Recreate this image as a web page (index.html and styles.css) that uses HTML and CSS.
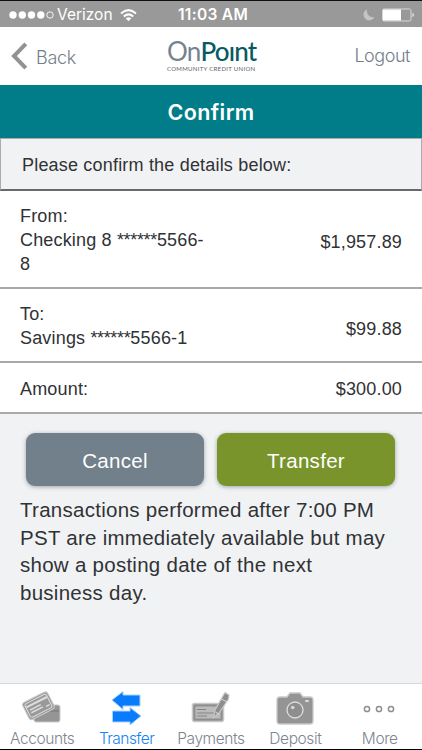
FILE: index.html
```html
<!DOCTYPE html>
<html lang="en">
<head>
<meta charset="utf-8">
<title>OnPoint – Confirm transfer</title>
<link rel="stylesheet" href="styles.css">
</head>
<body>
<div class="app">
  <div class="status">
    <div class="carrier">
      <svg class="signal" width="46" height="8" viewBox="0 0 46 8"><g fill="#fff"><circle cx="4" cy="4" r="3.7"/><circle cx="13.3" cy="4" r="3.7"/><circle cx="22.5" cy="4" r="3.7"/><circle cx="31.8" cy="4" r="3.7"/></g><circle cx="41" cy="4" r="3.2" fill="none" stroke="#fff" stroke-width=".9"/></svg>
      <span class="network">Verizon</span>
      <svg class="wifi" width="17" height="13" viewBox="0 0 17 13"><g fill="none" stroke="#fff" stroke-width="2"><path d="M1 4.4Q8.5-2.2 16 4.4"/><path d="M3.8 7.4Q8.5 3.3 13.2 7.4"/></g><path d="M5.7 9.3Q8.5 7 11.3 9.3L8.5 12.2Z" fill="#fff"/></svg>
    </div>
    <span class="time">11:03 AM</span>
    <div class="power">
      <svg width="53" height="14" viewBox="0 0 53 14"><path d="M5.2 1.2A5.8 5.8 0 1 0 12.5 9.2A6.3 6.3 0 0 1 5.2 1.2Z" fill="#c4c4c4"/><rect x="20.5" y="1" width="28.5" height="12" rx="1.5" fill="none" stroke="#d8d8d8"/><rect x="21" y="1.5" width="18" height="11" fill="#fff"/><path d="M50.3 5v4q1.8-.5 1.8-2t-1.8-2Z" fill="#ddd"/></svg>
    </div>
  </div>
  <header class="header">
    <div class="back"><svg width="17" height="28" viewBox="0 0 17 28"><path d="M14.8 1.8 3 14 14.8 26.2" fill="none" stroke="#929292" stroke-width="4"/></svg><span class="back-label">Back</span></div>
    <div class="logo">
      <div class="wordmark"><span class="on">On</span><span class="point">Poınt</span><span class="mark"></span></div>
      <div class="tagline">COMMUNITY CREDIT UNION</div>
    </div>
    <span class="logout">Logout</span>
  </header>
  <h1 class="title">Confirm</h1>
  <div class="notice">Please confirm the details below:</div>
  <main class="details">
    <div class="row from"><div>From:<br>Checking 8 <span class="mask">******</span>5566-<br>8</div><span>$1,957.89</span></div>
    <div class="row to"><div>To:<br>Savings <span class="mask">******</span>5566-1</div><span>$99.88</span></div>
    <div class="row amount"><div>Amount:</div><span>$300.00</span></div>
  </main>
  <div class="buttons"><button class="cancel">Cancel</button><button class="submit">Transfer</button></div>
  <p class="message">Transactions performed after 7:00 PM<br>PST are immediately available but may<br>show a posting date of the next<br>business day.</p>
  <nav class="tabs">
    <div class="tab accounts">
      <svg width="42" height="36" viewBox="0 0 42 36"><path d="M15 15h22q2 0 2 2v13q0 2-2 2H15q-2 0-2-2V17q0-2 2-2Z" fill="#959595" stroke="#ccc"/><path d="M14 21h24" stroke="#858585" stroke-width="2"/><g transform="rotate(-27 17 16)"><rect x="3.5" y="6.5" width="28" height="19" rx="3" fill="#999" stroke="#c9c9c9"/><rect x="5.5" y="8.5" width="24" height="15" rx="2" fill="none" stroke="#ddd"/><path d="M6 12h23" stroke="#ddd" stroke-width="2"/><path d="M8 16h12M8 19h13M24 20h4" stroke="#ddd" stroke-width="1.5"/></g></svg>
      <span>Accounts</span>
    </div>
    <div class="tab active">
      <svg width="32" height="36" viewBox="0 0 32 36"><path d="M1 10 12 1.5V5H29V16H12v3.5ZM30 26 19 17.5V21H1.5V32H19V35Z" fill="#087cfc" stroke="#a5d2ff" stroke-width="1" stroke-linejoin="round"/></svg>
      <span>Transfer</span>
    </div>
    <div class="tab payments">
      <svg width="40" height="36" viewBox="0 0 40 36"><rect x="1.5" y="13.5" width="31" height="18" rx="2" fill="#929292" stroke="#c8c8c8" stroke-width="1.5"/><rect x="4" y="16" width="26" height="13" fill="#bbb" stroke="#888" stroke-width=".8"/><path d="M6 19.5h9M6 23h17M6 26h10" stroke="#858585" stroke-width="1.1"/><path d="M22.5 27.5 24 20 32.5 5 34 2.5 38 5 37.5 9 28 23Z" fill="#8e8e8e" stroke="#c8c8c8" stroke-width="1.2"/><path d="M30.5 9 36 12M24.5 22l3 2" stroke="#ddd"/></svg>
      <span>Payments</span>
    </div>
    <div class="tab deposit">
      <svg width="38" height="36" viewBox="0 0 38 36"><path d="M4 7h7l3-4h10l3 4h7q3 0 3 3v21q0 3-3 3H4q-3 0-3-3V10q0-3 3-3Z" fill="#949494" stroke="#c8c8c8" stroke-width="1.3"/><circle cx="19" cy="20" r="8" fill="#8e8e8e" stroke="#ddd" stroke-width="1.3"/><circle cx="16.7" cy="17.5" r="1.8" fill="#d5d5d5"/><rect x="29" y="10" width="4" height="2" rx="1" fill="#ddd"/></svg>
      <span>Deposit</span>
    </div>
    <div class="tab more">
      <svg width="34" height="36" viewBox="0 0 34 36"><g fill="none" stroke="#8e8e8e" stroke-width="1.5"><circle cx="4" cy="19" r="2.6"/><circle cx="16" cy="19" r="2.6"/><circle cx="28" cy="19" r="2.6"/></g></svg>
      <span>More</span>
    </div>
  </nav>
</div>
</body>
</html>
```
FILE: styles.css
```css
* { box-sizing: border-box; }
body { margin: 0; font-family: "Liberation Sans", sans-serif; color: #303236; }
svg { display: block; flex: none; }
.app { width: 422px; height: 750px; display: flex; flex-direction: column; background: #f1f2f4; overflow: hidden; border-top: 1px solid #101014; border-bottom: 1px solid #000; }
.status { height: 26px; flex: none; display: grid; grid-template-columns: 1fr auto 1fr; align-items: center; padding: 2px 7px 0 9px; background: #999; color: #fff; font-family: Inter, sans-serif; white-space: nowrap; }
.carrier { display: flex; align-items: center; }
.network { width: 55px; margin-left: 2px; font-size: 15.5px; line-height: 20px; }
.wifi { margin-left: 8px; }
.time { margin-left: 2px; font-size: 15.5px; font-weight: 600; line-height: 20px; letter-spacing: .3px; }
.power { justify-self: end; }
.header { height: 58px; flex: none; display: grid; grid-template-columns: 1fr 92px 1fr; background: #fff; }
.back { display: flex; align-items: center; padding-left: 11px; gap: 8px; }
.back-label, .logout { font-family: Inter, sans-serif; font-weight: 300; color: #737e89; font-size: 18px; letter-spacing: -.3px; }
.back-label { padding-top: 3px; }
.logout { justify-self: end; align-self: center; padding: 0 12px 2px 0; letter-spacing: -.45px; }
.logo { display: flex; flex-direction: column; padding: 11px 0 0 2px; }
.wordmark { display: flex; height: 26px; line-height: 26px; font-family: Lato, sans-serif; font-size: 26px; letter-spacing: -.8px; white-space: nowrap; }
.on { color: #75838f; font-weight: 400; }
.point { color: #075a62; font-weight: 500; }
.mark { width: 2px; height: 2px; margin: 6px 0 0 1px; border-radius: 50%; background: #6e8589; }
.tagline { margin-top: 1px; height: 8px; font: 6px/8px Lato, sans-serif; letter-spacing: .31px; color: #59636b; white-space: nowrap; }
.title { height: 53px; flex: none; margin: 0; background: #007d88; color: #fff; text-align: center; font: 600 21.5px/55px Inter, sans-serif; letter-spacing: .4px; }
.notice { height: 53px; flex: none; border: 2px solid #aaabad; border-left-width: 1px; border-right-width: 1px; border-top-width: 1px; border-bottom-color: #68696c; padding-left: 21px; font-size: 18px; letter-spacing: .19px; line-height: 52px; }
.details { flex: none; background: #fff; font-size: 18px; line-height: 24px; letter-spacing: .17px; }
.mask { letter-spacing: -.35px; }
.row { display: flex; justify-content: space-between; align-items: center; padding: 0 20px; border-bottom: 2px solid #a8a9ab; }
.from { height: 98px; }
.to { height: 74px; }
.amount { height: 51px; padding-top: 2px; }
.from > span { padding-top: 6px; }
.from > div { padding-top: 1px; }
.to > div { padding-top: 1px; }
.to > span { padding-top: 7px; }
.buttons { display: grid; grid-template-columns: 178px 178px; gap: 13px; margin: 19px 0 0 26px; flex: none; }
.buttons button { height: 53px; padding: 3px 0 0; border: 0; border-radius: 9px; color: #fff; font: 20.5px/24px "Liberation Sans", sans-serif; letter-spacing: .3px; box-shadow: 0 1px 4px rgba(60,70,80,.45); }
.buttons .cancel { background: #71808a; }
.buttons .submit { background: #78942a; }
.message { margin: 10px 20px 0; font-size: 20.5px; letter-spacing: .27px; line-height: 27.7px; white-space: nowrap; }
.tabs { height: 66px; flex: none; margin-top: auto; background: #fff; border-top: 1px solid #d6d9dc; display: grid; grid-template-columns: repeat(5, 84.4px); color: #7d8690; font: 300 15.5px/19px Inter, sans-serif; letter-spacing: -.4px; }
.tab { display: flex; flex-direction: column; align-items: center; padding-top: 6px; gap: 3px; }
.active { color: #1684f4; letter-spacing: -.55px; }
```
